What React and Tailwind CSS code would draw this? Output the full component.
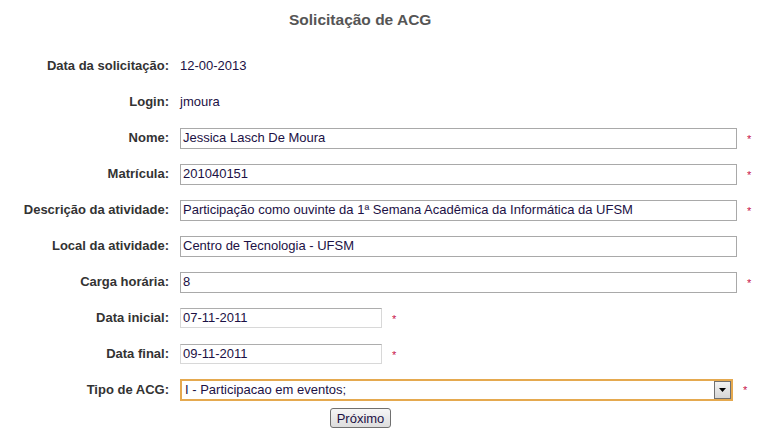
export default function App() {
  const rows = [
    { label: "Data da solicitação:", text: "12-00-2013" },
    { label: "Login:", text: "jmoura" },
    { label: "Nome:", input: "Jessica Lasch De Moura", req: true },
    { label: "Matrícula:", input: "201040151", req: true },
    {
      label: "Descrição da atividade:",
      input: "Participação como ouvinte da 1ª Semana Acadêmica da Informática da UFSM",
      req: true,
    },
    { label: "Local da atividade:", input: "Centro de Tecnologia - UFSM" },
    { label: "Carga horária:", input: "8", req: true },
    { label: "Data inicial:", date: "07-11-2011", req: true },
    { label: "Data final:", date: "09-11-2011", req: true },
  ];

  const star = <span className="text-[11px] text-[#c8104a] leading-none">*</span>;

  return (
    <div className="w-[773px] h-[447px] bg-white font-['Liberation_Sans',Arial,sans-serif] text-[13px]">
      <h1 className="pt-[10px] pl-[289px] text-[15.5px] font-bold text-[#555555] leading-[19px]">
        Solicitação de ACG
      </h1>
      <div className="mt-[19px] grid grid-cols-[169px_1fr] gap-x-[11px]">
        {rows.map((r) => (
          <div key={r.label} className="contents">
            <div className="h-[36px] flex items-center justify-end font-bold text-[#333333]">
              {r.label}
            </div>
            <div className="h-[36px] flex items-center">
              {r.text && <span className="text-[#1c1145]">{r.text}</span>}
              {r.input !== undefined && (
                <div className="w-[557px] h-[21px] border border-[#a9a9a9] flex items-center px-[2px] text-[#1c1145]">
                  {r.input}
                </div>
              )}
              {r.date && (
                <div className="w-[202px] h-[20px] border border-[#d8d8d8] border-t-[#adadad] flex items-center px-[2px] text-[#1c1145]">
                  {r.date}
                </div>
              )}
              {r.req && <span className="ml-[10px] mt-[1px]">{star}</span>}
            </div>
          </div>
        ))}
        <div className="h-[36px] flex items-center justify-end font-bold text-[#333333]">
          Tipo de ACG:
        </div>
        <div className="h-[36px] flex items-center">
          <div className="w-[553px] h-[22px] border-2 border-[#e5a94f] flex items-center justify-between text-[#1c1145]">
            <span className="pl-[3px]">I - Participacao em eventos;</span>
            <div className="w-[17px] h-[18px] border border-[#707070] bg-gradient-to-b from-[#f2f2f2] to-[#d6d6d6] flex items-center justify-center">
              <svg width="7" height="4" viewBox="0 0 7 4">
                <path d="M0 0H7L3.5 4Z" fill="#000" />
              </svg>
            </div>
          </div>
          <span className="ml-[10px]">{star}</span>
        </div>
      </div>
      <div className="flex pl-[330px]">
        <button className="w-[61px] h-[20px] border border-[#707070] rounded-[3px] bg-gradient-to-b from-[#f6f6f6] to-[#dddddd] text-[13px] text-[#1c1145] leading-none">
          Próximo
        </button>
      </div>
    </div>
  );
}
